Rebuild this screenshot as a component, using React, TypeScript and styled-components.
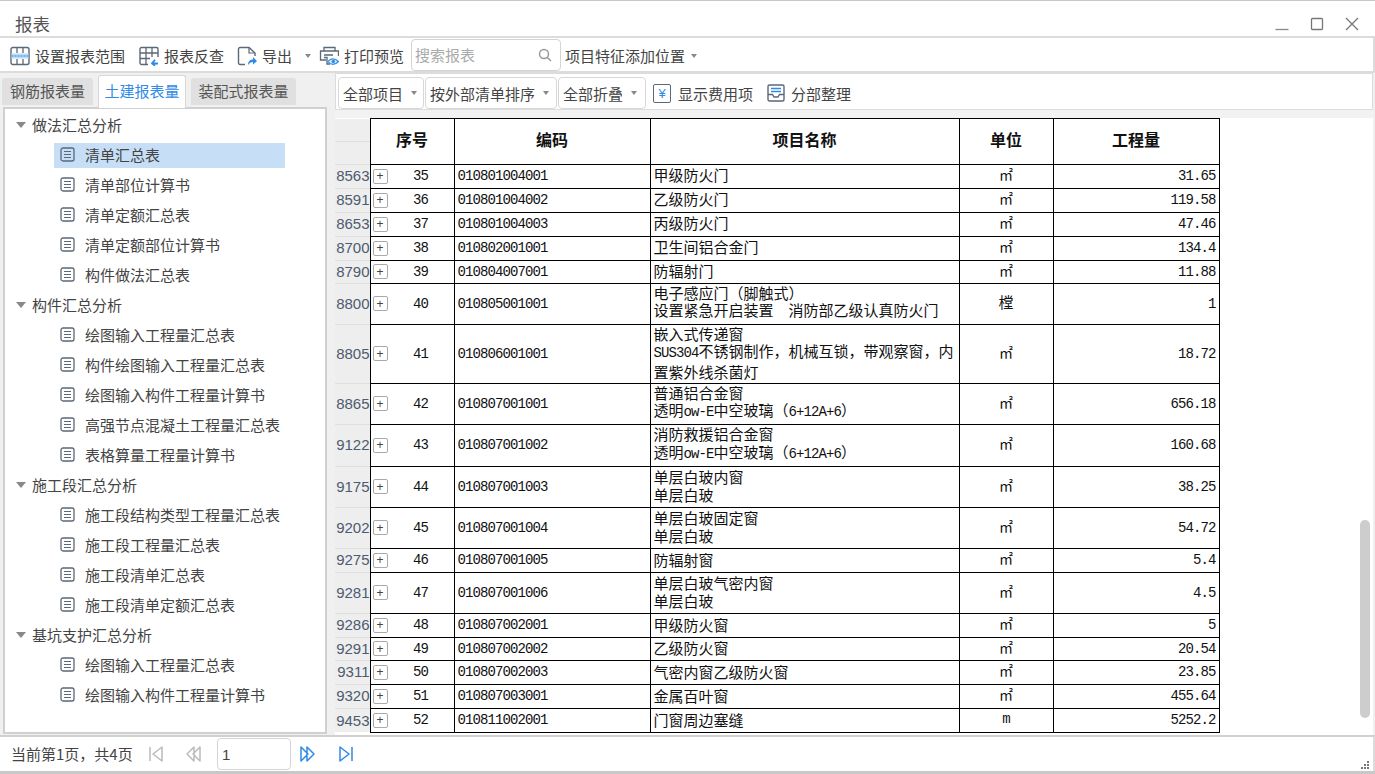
import { Fragment } from 'react'
import styled, { createGlobalStyle } from 'styled-components'

interface Row {
  head: string
  seq: number
  code: string
  name: string[]
  unit: string
  qty: string
  height: number
}

const rows: Row[] = [
  { head: '8563', seq: 35, code: '010801004001', name: ['甲级防火门'], unit: '㎡', qty: '31.65', height: 24 },
  { head: '8591', seq: 36, code: '010801004002', name: ['乙级防火门'], unit: '㎡', qty: '119.58', height: 24 },
  { head: '8653', seq: 37, code: '010801004003', name: ['丙级防火门'], unit: '㎡', qty: '47.46', height: 24 },
  { head: '8700', seq: 38, code: '010802001001', name: ['卫生间铝合金门'], unit: '㎡', qty: '134.4', height: 24 },
  { head: '8790', seq: 39, code: '010804007001', name: ['防辐射门'], unit: '㎡', qty: '11.88', height: 23 },
  { head: '8800', seq: 40, code: '010805001001', name: ['电子感应门（脚触式）', '设置紧急开启装置  消防部乙级认真防火门'], unit: '樘', qty: '1', height: 41 },
  { head: '8805', seq: 41, code: '010806001001', name: ['嵌入式传递窗', 'SUS304不锈钢制作，机械互锁，带观察窗，内', '置紫外线杀菌灯'], unit: '㎡', qty: '18.72', height: 59 },
  { head: '8865', seq: 42, code: '010807001001', name: ['普通铝合金窗', '透明ow-E中空玻璃（6+12A+6）'], unit: '㎡', qty: '656.18', height: 41 },
  { head: '9122', seq: 43, code: '010807001002', name: ['消防救援铝合金窗', '透明ow-E中空玻璃（6+12A+6）'], unit: '㎡', qty: '160.68', height: 42 },
  { head: '9175', seq: 44, code: '010807001003', name: ['单层白玻内窗', '单层白玻'], unit: '㎡', qty: '38.25', height: 41 },
  { head: '9202', seq: 45, code: '010807001004', name: ['单层白玻固定窗', '单层白玻'], unit: '㎡', qty: '54.72', height: 41 },
  { head: '9275', seq: 46, code: '010807001005', name: ['防辐射窗'], unit: '㎡', qty: '5.4', height: 24 },
  { head: '9281', seq: 47, code: '010807001006', name: ['单层白玻气密内窗', '单层白玻'], unit: '㎡', qty: '4.5', height: 41 },
  { head: '9286', seq: 48, code: '010807002001', name: ['甲级防火窗'], unit: '㎡', qty: '5', height: 24 },
  { head: '9291', seq: 49, code: '010807002002', name: ['乙级防火窗'], unit: '㎡', qty: '20.54', height: 23 },
  { head: '9311', seq: 50, code: '010807002003', name: ['气密内窗乙级防火窗'], unit: '㎡', qty: '23.85', height: 24 },
  { head: '9320', seq: 51, code: '010807003001', name: ['金属百叶窗'], unit: '㎡', qty: '455.64', height: 24 },
  { head: '9453', seq: 52, code: '010811002001', name: ['门窗周边塞缝'], unit: 'm', qty: '5252.2', height: 24 }
]

const tree = [
  { title: '做法汇总分析', items: ['清单汇总表', '清单部位计算书', '清单定额汇总表', '清单定额部位计算书', '构件做法汇总表'] },
  { title: '构件汇总分析', items: ['绘图输入工程量汇总表', '构件绘图输入工程量汇总表', '绘图输入构件工程量计算书', '高强节点混凝土工程量汇总表', '表格算量工程量计算书'] },
  { title: '施工段汇总分析', items: ['施工段结构类型工程量汇总表', '施工段工程量汇总表', '施工段清单汇总表', '施工段清单定额汇总表'] },
  { title: '基坑支护汇总分析', items: ['绘图输入工程量汇总表', '绘图输入构件工程量计算书'] }
]

const INK = '#5b6878'
const BLUE = '#2f8be6'

// half width latin next to full width chinese, like the SimSun grid in the original
function Mixed({ text }: { text: string }) {
  const parts = text.split(/([\x20-\x7e]+)/).filter(Boolean)
  return (
    <>
      {parts.map((part, i) =>
        /^[\x20-\x7e]+$/.test(part) ? <Latin key={i}>{part}</Latin> : <Fragment key={i}>{part}</Fragment>
      )}
    </>
  )
}

function RangeIcon() {
  return (
    <svg width="20" height="20" viewBox="0 0 20 20" fill="none">
      <rect x="1" y="1.5" width="18" height="17" rx="2" stroke={INK} strokeWidth="1.4" />
      <path d="M7 2v5M13 2v5M7 13v5M13 13v5" stroke={INK} strokeWidth="1.3" />
      <rect x="1.5" y="7.5" width="17" height="5" fill="#bcdcf8" />
      <path d="M1.5 10h17" stroke={BLUE} strokeWidth="1" strokeDasharray="2 1" />
    </svg>
  )
}

function ReverseIcon() {
  return (
    <svg width="20" height="20" viewBox="0 0 20 20" fill="none">
      <path d="M9 18.5H2.5a1.5 1.5 0 0 1-1.5-1.5V3a1.5 1.5 0 0 1 1.5-1.5h15A1.5 1.5 0 0 1 19 3v8" stroke={INK} strokeWidth="1.4" />
      <path d="M1 7h18M1 12.500h10M7 2v16.500M13 2v9" stroke={INK} strokeWidth="1.3" />
      <path d="M19 17.500h-5.500M16 13.800l-3 3.500 3 2.500" stroke={BLUE} strokeWidth="1.8" />
    </svg>
  )
}

function ExportIcon() {
  return (
    <svg width="20" height="20" viewBox="0 0 20 20" fill="none">
      <path d="M8 18.500H3A1.500 1.500 0 0 1 1.500 17V3A1.500 1.500 0 0 1 3 1.500h9l6 5.500v3" stroke={INK} strokeWidth="1.4" />
      <path d="M12 1.500V7h6" stroke={INK} strokeWidth="1.2" />
      <path d="M11 19c0-3.500 2-5.500 5-5.500V11l4 4-4 3.500V16c-2 0-3.500 1-5 3z" fill={BLUE} />
    </svg>
  )
}

function PrintIcon() {
  return (
    <svg width="20" height="20" viewBox="0 0 20 20" fill="none">
      <path d="M5 5V1.500h11V5" stroke={INK} strokeWidth="1.3" />
      <path d="M7 14H1.500V5h18v5" stroke={INK} strokeWidth="1.3" />
      <path d="M5 9h9M5 11.500h3v6.500h3" stroke={INK} strokeWidth="1.3" />
      <path d="M9 15.500c2.500-3.500 7-3.500 10.500 0-3.500 3.700-8 3.700-10.500 0z" fill="#d6eafc" stroke={BLUE} strokeWidth="1.2" />
      <circle cx="14.300" cy="15.500" r="1.700" fill={BLUE} />
    </svg>
  )
}

function SearchIcon() {
  return (
    <svg width="14" height="14" viewBox="0 0 14 14" fill="none">
      <circle cx="6" cy="6" r="4.500" stroke="#999" strokeWidth="1.500" />
      <path d="M9.500 9.500 13 13" stroke="#999" strokeWidth="1.500" />
    </svg>
  )
}

function DocIcon() {
  return (
    <svg width="15" height="15" viewBox="0 0 15 15" fill="none">
      <rect x="1" y="1" width="13" height="13" rx="2" stroke={INK} strokeWidth="1.300" />
      <path d="M4 4.500h7M4 7.500h7M4 10.500h7" stroke={INK} strokeWidth="1.200" />
    </svg>
  )
}

function TrayIcon() {
  return (
    <svg width="18" height="18" viewBox="0 0 18 18" fill="none">
      <path d="M1 10V2.500A1.500 1.500 0 0 1 2.500 1h13A1.500 1.500 0 0 1 17 2.500V10" stroke={INK} strokeWidth="1.400" />
      <path d="M1 10.500h4.500l1.500 2.500h4l1.500-2.500H17v5a1.500 1.500 0 0 1-1.500 1.500h-13A1.500 1.500 0 0 1 1 15.500z" stroke={INK} strokeWidth="1.400" />
      <path d="M4 4.500h10M4 7.500h10" stroke={BLUE} strokeWidth="1.400" />
    </svg>
  )
}

function PageIcon({ kind, color }: { kind: 'first' | 'prev' | 'next' | 'last'; color: string }) {
  const paths = {
    first: 'M2 2v14M14 2v14L5 9z',
    prev: 'M8 2v14L1 9zM14 2v14L7 9z',
    next: 'M1 2v14l7-7zM7 2v14l7-7z',
    last: 'M2 2v14l9-7zM14 2v14'
  }
  return (
    <svg width="16" height="18" viewBox="0 0 16 18" fill="none">
      <path d={paths[kind]} stroke={color} strokeWidth="1.500" strokeLinejoin="round" />
    </svg>
  )
}

export default function App() {
  return (
    <Window>
      <GlobalStyle />
      <TitleBar>
        <Title>报表</Title>
        <WindowButtons>
          <svg width="14" height="14" viewBox="0 0 14 14" fill="none">
            <path d="M0.500 12.500h13" stroke="#888" strokeWidth="1.300" />
          </svg>
          <svg width="14" height="14" viewBox="0 0 14 14" fill="none">
            <rect x="1.500" y="1.500" width="11" height="11" rx="1" stroke="#777" strokeWidth="1.300" />
          </svg>
          <svg width="14" height="14" viewBox="0 0 14 14" fill="none">
            <path d="M1 1l12 12M13 1 1 13" stroke="#777" strokeWidth="1.300" />
          </svg>
        </WindowButtons>
      </TitleBar>

      <Toolbar>
        <ToolButton $width={129}><RangeIcon />设置报表范围</ToolButton>
        <ToolButton $width={98}><ReverseIcon />报表反查</ToolButton>
        <ToolButton $width={82}><ExportIcon />导出<Caret $left={13} /></ToolButton>
        <ToolButton $width={92}><PrintIcon />打印预览</ToolButton>
        <SearchBox>搜索报表<SearchIcon /></SearchBox>
        <PositionSelect>项目特征添加位置<Caret $left={6} /></PositionSelect>
      </Toolbar>

      <Body>
        <LeftColumn>
          <Tabs>
            <Tab $width={91}>钢筋报表量</Tab>
            <Tab $width={88} $active>土建报表量</Tab>
            <Tab $width={105}>装配式报表量</Tab>
          </Tabs>
          <TreePanel>
            {tree.map((group) => (
              <Fragment key={group.title}>
                <GroupRow><GroupArrow />{group.title}</GroupRow>
                {group.items.map((item) => (
                  <TreeItem key={item} $active={item === '清单汇总表'}>
                    <DocIcon />
                    {item}
                  </TreeItem>
                ))}
              </Fragment>
            ))}
          </TreePanel>
        </LeftColumn>

        <RightColumn>
          <ReportBar>
            <BarSelect $width={86}>全部项目<Caret $left={13} /></BarSelect>
            <BarSelect $width={132}>按外部清单排序<Caret $left={13} /></BarSelect>
            <BarSelect $width={88}>全部折叠<Caret $left={13} /></BarSelect>
            <BarButton $left={7}><YenIcon>¥</YenIcon>显示费用项</BarButton>
            <BarButton $left={14}><TrayIcon />分部整理</BarButton>
          </ReportBar>
          <Strip />
          <TableArea>
            <Sheet>
              <colgroup>
                <col width={35} />
                <col width={84} />
                <col width={196} />
                <col width={309} />
                <col width={94} />
                <col width={166} />
              </colgroup>
              <thead>
                <tr>
                  <CornerCell><CornerTop /><CornerBottom /></CornerCell>
                  <HeadCell>序号</HeadCell>
                  <HeadCell>编码</HeadCell>
                  <HeadCell>项目名称</HeadCell>
                  <HeadCell>单位</HeadCell>
                  <HeadCell>工程量</HeadCell>
                </tr>
              </thead>
              <tbody>
                {rows.map((row) => (
                  <SheetRow key={row.seq} $height={row.height}>
                    <RowHead>{row.head}</RowHead>
                    <DataCell>
                      <SeqBox>
                        <Expand>+</Expand>
                        <SeqNumber>{row.seq}</SeqNumber>
                      </SeqBox>
                    </DataCell>
                    <CodeCell>{row.code}</CodeCell>
                    <NameCell>
                      {row.name.map((line) => (
                        <NameLine key={line}><Mixed text={line} /></NameLine>
                      ))}
                    </NameCell>
                    <UnitCell $small={row.unit === '㎡'}><Mixed text={row.unit} /></UnitCell>
                    <QtyCell>{row.qty}</QtyCell>
                  </SheetRow>
                ))}
              </tbody>
            </Sheet>
            <ScrollThumb />
          </TableArea>
        </RightColumn>
      </Body>

      <Footer>
        <PageText>当前第1页，共4页</PageText>
        <PagerSlot $left={13}><PageIcon kind="first" color="#bbb" /></PagerSlot>
        <PagerSlot $left={22}><PageIcon kind="prev" color="#bbb" /></PagerSlot>
        <PageInput>1</PageInput>
        <PagerSlot $left={9}><PageIcon kind="next" color={BLUE} /></PagerSlot>
        <PagerSlot $left={22}><PageIcon kind="last" color={BLUE} /></PagerSlot>
        <Grip>
          <svg width="10" height="10" viewBox="0 0 10 10" fill="#777">
            <rect x="7" y="1" width="2" height="2" />
            <rect x="4" y="4" width="2" height="2" />
            <rect x="7" y="4" width="2" height="2" />
            <rect x="1" y="7" width="2" height="2" />
            <rect x="4" y="7" width="2" height="2" />
            <rect x="7" y="7" width="2" height="2" />
          </svg>
        </Grip>
      </Footer>
    </Window>
  )
}

const GlobalStyle = createGlobalStyle`
  html, body {
    margin: 0;
    padding: 0;
    overflow: hidden;
  }
  * {
    box-sizing: border-box;
  }
`

const Window = styled.div`
  width: 1375px;
  height: 774px;
  display: flex;
  flex-direction: column;
  background: #fff;
  border-top: 1px solid #c8c8c8;
  border-bottom: 3px solid #c8c8c8;
  font-family: 'Noto Sans CJK SC', 'Noto Sans', sans-serif;
  font-size: 15px;
  color: #444;
`

const TitleBar = styled.div`
  height: 35px;
  flex: none;
  display: flex;
  align-items: flex-end;
  justify-content: space-between;
  padding: 0 16px 0 15px;
`

const Title = styled.div`
  font-size: 17.5px;
  line-height: 24px;
  color: #555;
`

const WindowButtons = styled.div`
  display: flex;
  gap: 21px;
  margin-bottom: 5px;
  svg {
    display: block;
  }
`

const Toolbar = styled.div`
  height: 37px;
  flex: none;
  display: flex;
  align-items: center;
  padding: 2px 0 0 10px;
  border-top: 2px solid #dcdcdc;
  border-bottom: 2px solid #dcdcdc;
  border-right: 2px solid #dcdcdc;
`

const ToolButton = styled.div<{ $width: number }>`
  width: ${({ $width }) => $width}px;
  flex: none;
  display: flex;
  align-items: center;
  gap: 5px;
  white-space: nowrap;
`

const Caret = styled.span<{ $left: number }>`
  display: inline-block;
  margin-left: ${({ $left }) => $left - 5}px;
  border-left: 3px solid transparent;
  border-right: 3px solid transparent;
  border-top: 4px solid #888;
`

const SearchBox = styled.div`
  width: 150px;
  height: 32px;
  flex: none;
  display: flex;
  align-items: center;
  justify-content: space-between;
  margin-top: -2px;
  padding: 0 8px 0 3px;
  border: 1px solid #d4d4d4;
  border-radius: 4px;
  color: #aaa;
`

const PositionSelect = styled.div`
  flex: none;
  display: flex;
  align-items: center;
  gap: 5px;
  margin-left: 4px;
`

const Body = styled.div`
  flex: 1;
  min-height: 0;
  display: flex;
  background: #f0f0f0;
`

const LeftColumn = styled.div`
  width: 332px;
  flex: none;
  display: flex;
  flex-direction: column;
  padding: 0 5px 1px 3px;
`

const Tabs = styled.div`
  height: 34px;
  flex: none;
  display: flex;
  align-items: flex-end;
  gap: 5px;
  margin-left: -1px;
`

const Tab = styled.div<{ $width: number; $active?: boolean }>`
  width: ${({ $width }) => $width}px;
  height: ${({ $active }) => ($active ? 33 : 27)}px;
  margin-bottom: ${({ $active }) => ($active ? -1 : 2)}px;
  padding-bottom: 3px;
  display: flex;
  align-items: center;
  justify-content: center;
  border-radius: 3px 3px 0 0;
  background: ${({ $active }) => ($active ? '#fff' : '#e0e0e0')};
  border: ${({ $active }) => ($active ? '1px solid #d8d8d8' : 'none')};
  border-bottom: none;
  color: ${({ $active }) => ($active ? '#2f8be6' : '#555')};
  position: relative;
  z-index: 1;
`

const TreePanel = styled.div`
  flex: 1;
  display: flex;
  flex-direction: column;
  background: #fff;
  border: 2px solid #d0d0d0;
  padding-top: 1px;
`

const GroupRow = styled.div`
  height: 30px;
  flex: none;
  display: flex;
  align-items: center;
  padding: 0 0 2px 11px;
  color: #444;
`

const GroupArrow = styled.span`
  width: 0;
  height: 0;
  margin: 1px 6px 0 0;
  border-left: 5px solid transparent;
  border-right: 5px solid transparent;
  border-top: 6px solid #888;
`

const TreeItem = styled.div<{ $active?: boolean }>`
  width: 231px;
  height: 25px;
  flex: none;
  margin: 3px 0 2px 49px;
  display: flex;
  align-items: center;
  gap: 10px;
  padding: 0 0 2px 6px;
  white-space: nowrap;
  background: ${({ $active }) => ($active ? '#c6dff7' : 'transparent')};
  color: #444;
`

const RightColumn = styled.div`
  flex: 1;
  min-width: 0;
  display: flex;
  flex-direction: column;
  padding-left: 3px;
  padding-right: 2px;
`

const ReportBar = styled.div`
  height: 37px;
  flex: none;
  display: flex;
  align-items: center;
  gap: 1px;
  padding: 2px 0 0 2px;
  background: #fff;
  border: 1px solid #dcdcdc;
`

const BarSelect = styled.div<{ $width: number }>`
  width: ${({ $width }) => $width}px;
  height: 32px;
  flex: none;
  display: flex;
  align-items: center;
  padding: 1px 0 0 4px;
  border: 1px solid #d8d8d8;
  border-radius: 4px;
  white-space: nowrap;
`

const BarButton = styled.div<{ $left: number }>`
  flex: none;
  display: flex;
  align-items: center;
  gap: 6px;
  padding-top: 1px;
  margin-left: ${({ $left }) => $left - 1}px;
`

const YenIcon = styled.span`
  width: 18px;
  height: 19px;
  display: flex;
  align-items: center;
  justify-content: center;
  margin-right: 1px;
  border: 1.5px solid ${INK};
  border-radius: 2px;
  color: ${BLUE};
  font-size: 13px;
  font-family: 'Liberation Sans', sans-serif;
`

const Strip = styled.div`
  height: 8px;
  flex: none;
  background: #f2f2f2;
`

const TableArea = styled.div`
  flex: 1;
  min-height: 0;
  position: relative;
  overflow: hidden;
  background: #fff;
`

const Sheet = styled.table`
  width: 884px;
  table-layout: fixed;
  border-collapse: collapse;
  color: #111;
`

const CornerCell = styled.th`
  height: 45px;
  padding: 0;
  background: #eee;
  border: none;
`

const CornerTop = styled.div`
  height: 23px;
  border-bottom: 1px solid #dedede;
`

const CornerBottom = styled.div`
  height: 22px;
`

const HeadCell = styled.th`
  padding: 0 0 5px;
  border: 1px solid #000;
  font-size: 16px;
  font-weight: 700;
  text-align: center;
  color: #111;
`

const SheetRow = styled.tr<{ $height: number }>`
  height: ${({ $height }) => $height}px;
`

const RowHead = styled.td`
  padding: 0;
  background: #eee;
  border-top: 1px solid #dedede;
  font-family: 'Liberation Sans', sans-serif;
  font-size: 15px;
  line-height: 16px;
  color: #4d5b70;
  white-space: nowrap;
  text-align: right;
`

const DataCell = styled.td`
  padding: 0;
  border: 1px solid #000;
  line-height: 16px;
`

const SeqBox = styled.div`
  display: flex;
  align-items: center;
  padding-left: 2px;
`

const Expand = styled.span`
  width: 15px;
  height: 15px;
  flex: none;
  display: flex;
  align-items: center;
  justify-content: center;
  border: 1px solid #aaa;
  border-radius: 2px;
  font-family: 'Liberation Sans', sans-serif;
  font-size: 12px;
  line-height: 1;
  color: #444;
`

const SeqNumber = styled.span`
  flex: 1;
  text-align: center;
  font-family: 'Liberation Mono', monospace;
  font-size: 14px;
  letter-spacing: -0.9px;
  color: #111;
`

const CodeCell = styled(DataCell)`
  padding-left: 3px;
  font-family: 'Liberation Mono', monospace;
  font-size: 14px;
  letter-spacing: -0.9px;
`

const NameCell = styled(DataCell)`
  padding: 0 0 2px 3px;
  font-size: 15px;
  line-height: 17.6px;
`

const NameLine = styled.div`
  white-space: pre;
`

const Latin = styled.span`
  font-family: 'Liberation Mono', monospace;
  font-size: 14px;
  letter-spacing: -0.9px;
`

const UnitCell = styled(DataCell)<{ $small: boolean }>`
  padding-bottom: 4px;
  text-align: center;
  font-size: ${({ $small }) => ($small ? 14 : 15)}px;
`

const QtyCell = styled(DataCell)`
  padding-right: 3px;
  text-align: right;
  font-family: 'Liberation Mono', monospace;
  font-size: 14px;
  letter-spacing: -0.9px;
`

const ScrollThumb = styled.div`
  position: absolute;
  right: 3px;
  bottom: 17px;
  width: 10px;
  height: 198px;
  border-radius: 5px;
  background: #cdcdcd;
`

const Footer = styled.div`
  height: 36px;
  flex: none;
  display: flex;
  align-items: center;
  position: relative;
  padding-left: 11px;
  border-top: 2px solid #d0d0d0;
  border-right: 2px solid #dcdcdc;
`

const PageText = styled.div`
  width: 124px;
  flex: none;
  padding-bottom: 1px;
  white-space: nowrap;
`

const PagerSlot = styled.div<{ $left: number }>`
  flex: none;
  display: flex;
  margin-left: ${({ $left }) => $left}px;
`

const PageInput = styled.div`
  width: 74px;
  height: 32px;
  flex: none;
  display: flex;
  align-items: center;
  margin-left: 15px;
  padding-left: 4px;
  border: 1px solid #d4d4d4;
  border-radius: 4px;
  font-family: 'Liberation Sans', sans-serif;
`

const Grip = styled.div`
  position: absolute;
  right: 3px;
  bottom: 1px;
  display: flex;
`
